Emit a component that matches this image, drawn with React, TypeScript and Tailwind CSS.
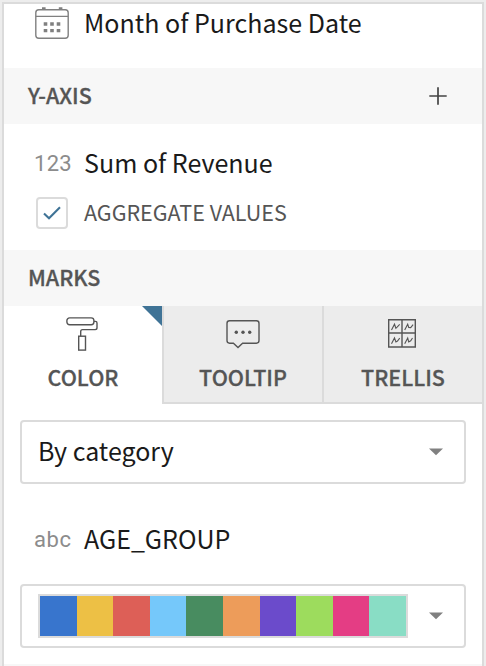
import type { ReactNode } from "react";

const SWATCHES = [
  { color: "bg-[#3875cd]", width: "w-[37px]" },
  { color: "bg-[#edc045]", width: "w-9" },
  { color: "bg-[#dd5f57]", width: "w-[37px]" },
  { color: "bg-[#75c8fa]", width: "w-9" },
  { color: "bg-[#488c60]", width: "w-[37px]" },
  { color: "bg-[#ed9c5a]", width: "w-[37px]" },
  { color: "bg-[#6b4bcb]", width: "w-9" },
  { color: "bg-[#9ddc5d]", width: "w-[37px]" },
  { color: "bg-[#e43d84]", width: "w-9" },
  { color: "bg-[#89ddc5]", width: "w-[37px]" },
];

function CalendarIcon() {
  return (
    <svg width="36" height="34" viewBox="0 0 36 34" fill="none" className="shrink-0">
      <rect x="1.8" y="3.7" width="32.4" height="28.6" rx="3" stroke="#808080" strokeWidth="1.4" />
      <path d="M1.8 10.4H34.2" stroke="#808080" strokeWidth="1.2" />
      <path d="M8 2.4h3.6M24.8 2.4h3.6" stroke="#808080" strokeWidth="2.2" />
      <path d="M9.7 18h3.6M16.2 18h3.6M22.7 18h3.6M9.7 24.6h3.6M16.2 24.6h3.6M22.7 24.6h3.6" stroke="#808080" strokeWidth="3.4" />
    </svg>
  );
}

function RollerIcon() {
  return (
    <svg width="34" height="36" viewBox="0 0 34 36" fill="none" stroke="#555" strokeWidth="1.4">
      <rect x=".9" y="1.9" width="27" height="6.8" rx="2.7" />
      <path d="M28 5.4h1.4q1.6 0 1.6 1.6v4.8q0 1.8-1.8 1.8H16.5q-1.8 0-1.8 1.8v4.8" />
      <rect x="12.7" y="20.2" width="6.8" height="13.9" />
    </svg>
  );
}

function TooltipIcon() {
  return (
    <svg width="36" height="32" viewBox="0 0 36 32" fill="none">
      <path
        d="M4.6 2.8h26.8q2.6 0 2.6 2.6v17.2q0 2.6-2.6 2.6H17.6L13 29.5l-4.6-4.3H4.6q-2.6 0-2.6-2.6V5.4q0-2.6 2.6-2.6Z"
        stroke="#555"
        strokeWidth="1.4"
      />
      <circle cx="11.3" cy="14.3" r="1.7" fill="#555" />
      <circle cx="18" cy="14.3" r="1.7" fill="#555" />
      <circle cx="24.7" cy="14.3" r="1.7" fill="#555" />
    </svg>
  );
}

function TrellisIcon() {
  return (
    <svg width="28" height="30" viewBox="0 0 28 30" fill="none" stroke="#555" className="mr-0.5">
      <path d="M.7.8h26.6v27.2H.7zM14 .8v27.2M.7 14h26.6" strokeWidth="1.4" />
      <path
        d="M3.5 11l3-5.8 1.4 4 1.2-1 2.6-2.8M16.7 11l3-5.8 1 3.2 2 .2 2.4-3M3.5 24.8l3-5.8 1.4 4 1.6-1 2.2-2.8M16.7 24.8l3-5.8 1 4 2-1.2 1.8-2.8"
        strokeWidth="1.1"
      />
    </svg>
  );
}

function Caret() {
  return (
    <svg width="14" height="8" viewBox="0 0 14 8" className="shrink-0">
      <path d="M0 .5h14L7 7.3Z" fill="#808080" />
    </svg>
  );
}

function SectionHeader({ title, children }: { title: string; children?: ReactNode }) {
  return (
    <div className="flex h-14 shrink-0 items-center justify-between bg-[#f7f7f7] pr-[35px] pl-6">
      <h2 className="-mt-0.5 text-[21.5px] leading-8 font-medium text-[#555] [-webkit-text-stroke:0.3px_#555]">{title}</h2>
      {children}
    </div>
  );
}

function Tab({ label, icon, active = false }: { label: string; icon: ReactNode; active?: boolean }) {
  return (
    <button
      className={
        active
          ? "relative flex h-[98px] w-[158px] flex-col items-center bg-white pt-2.5"
          : "flex h-[98px] w-40 flex-col items-center border-b-2 border-l-2 border-[#dbdbdb] bg-[#ececec] pt-2.5"
      }
    >
      <span className="flex h-9 items-center">{icon}</span>
      <span className="mt-[9px] text-[21.5px] leading-8 font-medium text-[#555] [-webkit-text-stroke:0.3px_#555]">{label}</span>
      {active && (
        <svg className="absolute top-0 right-0" width="20" height="20" viewBox="0 0 20 20">
          <path d="M0 0h20v20Z" fill="#3f7396" />
        </svg>
      )}
    </button>
  );
}

export default function App() {
  return (
    <div className="flex h-[666px] w-[486px] overflow-hidden bg-[#ededed] pt-0.5 pl-0.5 font-['Noto_Sans_CJK_JP','Noto_Sans_CJK_SC',sans-serif]">
      <main className="flex h-[664px] w-[482px] flex-col overflow-hidden border-x-2 border-t-2 border-[#dbdbdb] bg-white">
        <div className="flex h-16 shrink-0 items-start pt-0.5 pl-[30px]">
          <CalendarIcon />
          <span className="ml-3.5 text-[25.05px] leading-8 text-[#1a1a1a]">Month of Purchase Date</span>
        </div>

        <SectionHeader title="Y-AXIS">
          <svg width="18" height="18" viewBox="0 0 18 18" stroke="#444" strokeWidth="1.7">
            <path d="M9 .3v17.4M.3 9h17.4" />
          </svg>
        </SectionHeader>

        <div className="flex h-[126px] shrink-0 flex-col pt-[22px] pl-[30px]">
          <div className="flex h-8 items-center">
            <span className="mt-[3px] w-[50px] font-[Roboto,sans-serif] text-[22px] leading-8 tracking-[0.3px] text-[#8c8c8c]">123</span>
            <span className="text-[25.05px] leading-8 text-[#1a1a1a]">Sum of Revenue</span>
          </div>
          <label className="mt-[19px] flex h-8 items-center pl-0.5">
            <span className="flex size-8 items-center justify-center rounded-[4px] border-2 border-[#dbdbdb]">
              <svg width="18" height="14" viewBox="0 0 18 14" fill="none">
                <path d="M1 7.5l5 4.7L17 1.2" stroke="#3f7396" strokeWidth="2.1" />
              </svg>
            </span>
            <span className="-mt-0.5 ml-4 text-[21.5px] leading-8 text-[#555]">AGGREGATE VALUES</span>
          </label>
        </div>

        <SectionHeader title="MARKS" />

        <div className="flex shrink-0">
          <Tab label="COLOR" icon={<RollerIcon />} active />
          <Tab label="TOOLTIP" icon={<TooltipIcon />} />
          <Tab label="TRELLIS" icon={<TrellisIcon />} />
        </div>

        <div className="flex h-[260px] shrink-0 flex-col px-4 pt-4">
          <button className="flex h-16 items-center justify-between rounded-[4px] border-2 border-[#dbdbdb] pr-[21px] pl-4 text-[25px] leading-8 text-[#1a1a1a]">
            <span className="-mt-1">By category</span>
            <Caret />
          </button>
          <div className="mt-[38px] flex h-8 items-center pl-3.5">
            <span className="mt-[3px] w-[50px] font-[Roboto,sans-serif] text-[22px] leading-8 tracking-[0.6px] text-[#8c8c8c]">abc</span>
            <span className="text-[25px] leading-8 text-[#1a1a1a]">AGE_GROUP</span>
          </div>
          <button className="mt-[30px] flex h-16 items-center justify-between rounded-[4px] border-2 border-[#dbdbdb] pr-[21px] pl-4">
            <span className="flex h-11 border-2 border-[#dbdbdb]">
              {SWATCHES.map(({ color, width }) => (
                <span key={color} className={`h-full ${color} ${width}`} />
              ))}
            </span>
            <Caret />
          </button>
        </div>
        <div className="h-0.5 shrink-0 bg-[#f7f7f7]" />
      </main>
    </div>
  );
}
